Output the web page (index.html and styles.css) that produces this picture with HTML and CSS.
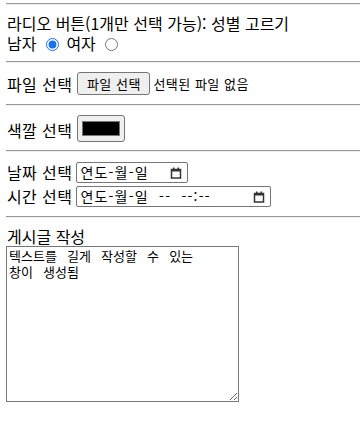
FILE: index.html
```html
<!DOCTYPE html>
<html lang="ko">
<head>
  <title>입력 양식 연습</title>
  <meta charset="UTF-8">
  <link rel="stylesheet" href="styles.css">
</head>
<body>
<hr class="first">
<div class="line">라디오 버튼(1개만 선택 가능): 성별 고르기</div>
<div class="line">
  남자 <input type="radio" name="gender" value="male" checked>
  여자 <input type="radio" name="gender" value="female">
</div>
<hr>
<div class="row file-row">
  <span class="label">파일 선택</span>
  <button type="button" class="file-btn">파일 선택</button>
  <span class="file-name">선택된 파일 없음</span>
</div>
<hr>
<div class="row color-row">
  <span class="label">색깔 선택</span>
  <input type="color" value="#000000">
</div>
<hr>
<div class="row date-row">
  <span class="label">날짜 선택</span>
  <span class="fake-input date">연도-월-일<svg class="cal" viewBox="0 0 12 12" width="12" height="12"><rect x="1.5" y="2.5" width="9" height="8.5" fill="none" stroke="#333" stroke-width="1.5"/><rect x="1" y="2" width="10" height="2.5" fill="#333"/><rect x="3" y="0.5" width="1.5" height="2" fill="#333"/><rect x="7.5" y="0.5" width="1.5" height="2" fill="#333"/></svg></span>
</div>
<div class="row date-row">
  <span class="label">시간 선택</span>
  <span class="fake-input datetime">연도-월-일&nbsp;&nbsp;--&nbsp;&nbsp;--:--<svg class="cal" viewBox="0 0 12 12" width="12" height="12"><rect x="1.5" y="2.5" width="9" height="8.5" fill="none" stroke="#333" stroke-width="1.5"/><rect x="1" y="2" width="10" height="2.5" fill="#333"/><rect x="3" y="0.5" width="1.5" height="2" fill="#333"/><rect x="7.5" y="0.5" width="1.5" height="2" fill="#333"/></svg></span>
</div>
<hr>
<div class="line">게시글 작성</div>
<textarea class="post">텍스트를 길게 작성할 수 있는 창이 생성됨</textarea>
</body>
</html>
```

FILE: styles.css
```css
body {
  margin: 0 0 8px 6px; font-family: "Noto Sans CJK KR", "Noto Sans", sans-serif;
  font-size: 16px; line-height: 20px; color: #000; background: #fff;
}
hr { margin: 8px 0; height: 0; border: none; border-top: 1px solid #9a9a9a; border-bottom: 1px solid #eee; }
hr.first { margin-top: 3px; }
.line { white-space: nowrap; padding-left: 1px; }
input[type=radio] { margin: 3px 3px 0 5px; width: 13px; height: 13px; vertical-align: -1px; accent-color: #1a73e8; }

.row { display: flex; gap: 5px; padding-left: 1px; white-space: nowrap; }
.label { letter-spacing: 0.4px; }
.file-row { height: 25px; align-items: center; }
.file-btn {
  font-family: inherit; font-size: 13px; line-height: 17px; height: 23px; width: 73px;
  padding: 1px 6px; border: 1px solid #767676; border-radius: 3px; background: #efefef; color: #000;
  letter-spacing: 0.5px;
}
.file-name { font-size: 13px; margin-left: -2px; letter-spacing: 0.5px; }
.color-row { height: 28px; align-items: center; }
.color-row .label { margin-top: 3px; }
input[type=color] {
  width: 48px; height: 27px; padding: 1px 2px; margin: 0;
  border: 1px solid #767676; border-radius: 3px; background: #efefef;
}
.date-row { height: 24px; align-items: flex-start; gap: 4px; }
.date-row .label { margin-top: 2px; }
.fake-input {
  display: inline-flex; align-items: center; justify-content: space-between; box-sizing: border-box;
  height: 21px; margin-top: 2px; padding: 0 5px 0 3px; font-size: 14px; line-height: 17px;
  letter-spacing: 1.2px; border: 1px solid #767676; border-radius: 2px;
}
.date { width: 112px; }
.datetime { width: 195px; }
.cal { display: block; }
.post {
  display: block; box-sizing: border-box; width: 233px; height: 156px; margin: 0;
  padding: 1px 20px 1px 2px; font-family: "Noto Sans CJK KR", sans-serif; font-size: 13px; line-height: 16px;
  word-spacing: 6.5px; word-break: keep-all; border: 1px solid #767676; color: #000; resize: both;
}
```
